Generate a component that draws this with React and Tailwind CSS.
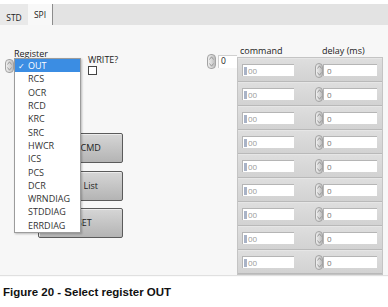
import React from "react"

const ui = { fontFamily: '"Open Sans", "DejaVu Sans", sans-serif' }

const registers = [
  "OUT", "RCS", "OCR", "RCD", "KRC", "SRC", "HWCR", "ICS", "PCS", "DCR", "WRNDIAG", "STDDIAG", "ERRDIAG",
]

function Spinner({ className = "" }) {
  return (
    <div
      className={`flex flex-col items-center justify-between rounded-[4px] border border-[#a3a3a3] bg-gradient-to-r from-[#efefef] via-[#d9d9d9] to-[#bcbcbc] py-[1px] ${className}`}
    >
      <svg width="5" height="4" viewBox="0 0 5 4">
        <path d="M0.5 3.5 L2.5 0.8 L4.5 3.5" fill="none" stroke="#8a8a8a" strokeWidth="0.8" />
      </svg>
      <svg width="5" height="4" viewBox="0 0 5 4">
        <path d="M0.5 0.5 L2.5 3.2 L4.5 0.5" fill="none" stroke="#8a8a8a" strokeWidth="0.8" />
      </svg>
    </div>
  )
}

function PanelButton({ children }) {
  return (
    <div className="flex h-[30px] w-[85px] items-center justify-center rounded-[2px] border border-[#5b5b5b] bg-gradient-to-b from-[#d6d6d6] to-[#b4b4b4] pr-[3px] text-[9px] text-[#222] shadow-[inset_1px_1px_0_#ececec]">
      {children}
    </div>
  )
}

function TableRow() {
  return (
    <div className="flex h-[24px] items-center border-b border-[#b9b9b9] border-t border-t-[#e6e6e6] bg-gradient-to-b from-[#dedede] to-[#d2d2d2]">
      <div className="ml-[4px] flex h-[12px] w-[52px] items-center border-t border-l border-[#b5b5b5] bg-white">
        <div className="ml-[1px] h-[8px] w-[3px] bg-[#a9b3c7]" />
        <span className="ml-[1px] text-[8px] leading-none text-[#9a9a9a]">00</span>
      </div>
      <Spinner className="ml-[21px] h-[15px] w-[8px]" />
      <div className="flex h-[12px] w-[54px] items-center border-t border-l border-[#b5b5b5] bg-white pl-[3px] text-[8px] leading-none text-[#777]">
        0
      </div>
    </div>
  )
}

export default function App() {
  return (
    <div className="h-[307px] w-[388px] overflow-hidden bg-white text-[#222]" style={ui}>
      {/* tab strip */}
      <div className="mt-[4px] flex h-[21px] bg-[#e3e3e3]">
        <div className="flex w-[28px] items-end justify-center bg-[#e9e9e9] pb-[3px] text-[8.5px] leading-none">
          STD
        </div>
        <div className="flex w-[25px] items-start justify-center border-r border-[#8c8c8c] bg-[#f8f8f8] pt-[7px] text-[8.5px] leading-none">
          SPI
        </div>
      </div>

      {/* front panel */}
      <div className="relative flex h-[250px] bg-[#f7f7f7] shadow-[0_1px_1px_#e0e0e0]">
        <div className="w-[207px]">
          <div className="flex h-[50px]">
            <div className="w-[83px] pt-[24px]">
              <div className="pl-[14px] text-[9px] leading-[10px]">Register</div>
              <Spinner className="ml-[5px] h-[14px] w-[9px]" />
            </div>
            <div className="pt-[30px]">
              <div className="pl-[5px] text-[9px] leading-[10px]">WRITE?</div>
              <div className="ml-[5px] mt-[1px] h-[9px] w-[9px] border border-[#444] bg-white" />
            </div>
          </div>
          <div className="ml-[38px] mt-[58px] flex flex-col gap-[9px]">
            <PanelButton>Send CMD</PanelButton>
            <div className="-mt-[1px]">
              <PanelButton>Send List</PanelButton>
            </div>
            <div className="-mt-[2px]">
              <PanelButton>RESET</PanelButton>
            </div>
          </div>
        </div>

        {/* index control */}
        <div className="mt-[28px] flex h-[16px] w-[30px] items-center">
          <Spinner className="h-[15px] w-[9px]" />
          <div className="ml-[2px] flex h-[13px] flex-1 items-center border-t border-l border-[#d0d0d0] bg-white pl-[2px] text-[8.5px] leading-none">
            0
          </div>
        </div>

        {/* array table */}
        <div className="pt-[20px]">
          <div className="flex h-[12px] text-[9px] leading-[12px]">
            <span className="ml-[3px] w-[82px]">command</span>
            <span>delay (ms)</span>
          </div>
          <div className="w-[146px] border border-[#c4c4c4] bg-[#cfcfcf]">
            {Array.from({ length: 9 }).map((_, i) => (
              <TableRow key={i} />
            ))}
          </div>
        </div>

        {/* open ring dropdown */}
        <div className="absolute left-[14px] top-[33px] w-[67px] border border-[#9c9c9c] bg-white shadow-[1px_1px_2px_rgba(0,0,0,0.25)]">
          {registers.map((r, i) => (
            <div
              key={r}
              className={`flex h-[13.3px] items-center text-[9px] leading-none ${
                i === 0 ? "bg-[#3b8de3] text-white" : "text-[#333]"
              }`}
            >
              <span className="w-[13px] pl-[3px] text-[8px]">{i === 0 ? "✓" : ""}</span>
              <span>{r}</span>
            </div>
          ))}
        </div>
      </div>

      <div
        className="pl-[3px] pt-[12px] text-[11.5px] font-bold leading-none text-[#111]"
        style={{ fontFamily: '"Liberation Sans", Arial, sans-serif' }}
      >
        Figure 20 - Select register OUT
      </div>
    </div>
  )
}
